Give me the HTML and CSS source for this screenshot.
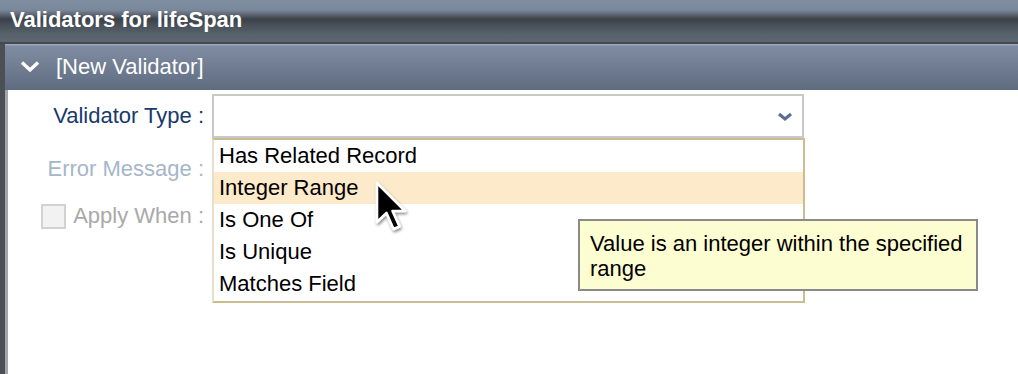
FILE: index.html
```html
<!DOCTYPE html>
<html>
<head>
<meta charset="utf-8">
<link rel="stylesheet" href="styles.css">
</head>
<body>
<div class="window">
  <div class="titlebar">Validators for lifeSpan</div>
  <div class="panel">
    <div class="section-header">
      <svg class="hdr-chevron" width="20" height="13" viewBox="0 0 20 13"><path d="M2 2.5 L10 10 L18 2.5" fill="none" stroke="#ffffff" stroke-width="3.4"/></svg>
      <span>[New Validator]</span>
    </div>
    <div class="form">
      <div class="row row1">
        <div class="label type">Validator Type :</div>
        <div class="select">
          <svg class="sel-chevron" width="16" height="10" viewBox="0 0 16 10"><path d="M2 2 L8 7 L14 2" fill="none" stroke="#5b6f92" stroke-width="3.2"/></svg>
          <div class="list">
            <div class="item">Has Related Record</div>
            <div class="item hover">Integer Range</div>
            <div class="item">Is One Of</div>
            <div class="item">Is Unique</div>
            <div class="item">Matches Field</div>
          </div>
        </div>
      </div>
      <div class="row row2">
        <div class="label err">Error Message :</div>
      </div>
      <div class="row row3">
        <div class="label apply"><span class="check"></span>Apply When :</div>
      </div>
    </div>
    <div class="tooltip">Value is an integer within the specified range</div>
    <svg class="cursor" width="36" height="56" viewBox="0 0 36 56">
      <defs><filter id="sh" x="-30%" y="-30%" width="160%" height="160%"><feDropShadow dx="1" dy="2" stdDeviation="1.5" flood-color="#000" flood-opacity="0.45"/></filter></defs>
      <path d="M3 2 L3 41 L12.5 32 L19.5 48 L25.5 45.5 L18.5 30 L31 30 Z" fill="#000" stroke="#fff" stroke-width="2.6" stroke-linejoin="round" filter="url(#sh)"/>
    </svg>
  </div>
</div>
</body>
</html>
```

FILE: styles.css
```css
* { box-sizing: border-box; }
html, body { margin: 0; padding: 0; }
body {
  width: 1018px;
  height: 374px;
  overflow: hidden;
  background: #ffffff;
  font-family: "Liberation Sans", Arial, Helvetica, sans-serif;
}
.window {
  display: flex;
  flex-direction: column;
  height: 374px;
}
.titlebar {
  height: 44px;
  flex: none;
  padding-left: 10px;
  padding-top: 7px;
  color: #ffffff;
  font-weight: bold;
  font-size: 22px;
  line-height: 26px;
  background: linear-gradient(to bottom, #808ea2 0px, #7b889b 10px, #5a636e 15px, #3b4149 19px, #4a525b 26px, #56616b 34px, #5b6771 42px, #46484d 42px, #46484d 44px);
}
.panel {
  position: relative;
  flex: 1;
  display: flex;
  flex-direction: column;
  border-left: 5px solid #4c4f53;
  padding-left: 3px;
  background: linear-gradient(to right, #a2a6ab 0, #a2a6ab 3px, #ffffff 3px);
  background-clip: padding-box;
}
.section-header {
  height: 46px;
  flex: none;
  display: flex;
  align-items: center;
  color: #ffffff;
  font-size: 22px;
  background: linear-gradient(to bottom, #9aa6ba 0px, #9aa6ba 1px, #7f8ca1 2px, #6f7c91 24px, #5f6c80 46px);
  margin-left: -3px;
  padding-left: 3px;
}
.hdr-chevron { margin-left: 12px; margin-right: 16px; margin-top: -1px; }
.form {
  padding-top: 4px;
  display: flex;
  flex-direction: column;
}
.row {
  display: flex;
  align-items: center;
}
.row1 { height: 44px; }
.row2 { height: 24px; margin-top: 19px; }
.row3 { height: 26px; margin-top: 22px; }
.label {
  width: 196px;
  font-size: 22px;
  line-height: 24px;
  display: flex;
  justify-content: flex-end;
  align-items: center;
  white-space: nowrap;
}
.label.type { color: #173a6d; }
.label.err { color: #a6b6ca; }
.label.apply { color: #a9a9a9; }
.check {
  display: inline-block;
  flex: none;
  width: 25px;
  height: 25px;
  border: 2px solid #d2d2d2;
  background: #f2f2f2;
  margin-right: 7px;
}
.select {
  position: relative;
  margin-left: 8px;
  width: 592px;
  height: 44px;
  border: 2px solid #c9c9c9;
  background: #ffffff;
}
.sel-chevron { position: absolute; right: 9px; top: 16px; }
.list {
  position: absolute;
  left: -2px;
  top: 42px;
  width: 593px;
  height: 165px;
  border: 2px solid #c9bc8e;
  border-left-color: #e6dfca;
  background: #ffffff;
  z-index: 2;
}
.item {
  height: 32px;
  line-height: 32px;
  padding-left: 5px;
  font-size: 22px;
  color: #000000;
}
.item.hover { background: #fdeacb; }
.tooltip {
  position: absolute;
  left: 573px;
  top: 175px;
  width: 400px;
  height: 72px;
  border: 2px solid #8a8a8a;
  background: #fdfdd2;
  color: #000000;
  font-size: 22px;
  line-height: 25px;
  padding: 10px 10px 0 10px;
  z-index: 3;
}
.cursor {
  position: absolute;
  left: 369px;
  top: 137px;
  z-index: 4;
}
```
